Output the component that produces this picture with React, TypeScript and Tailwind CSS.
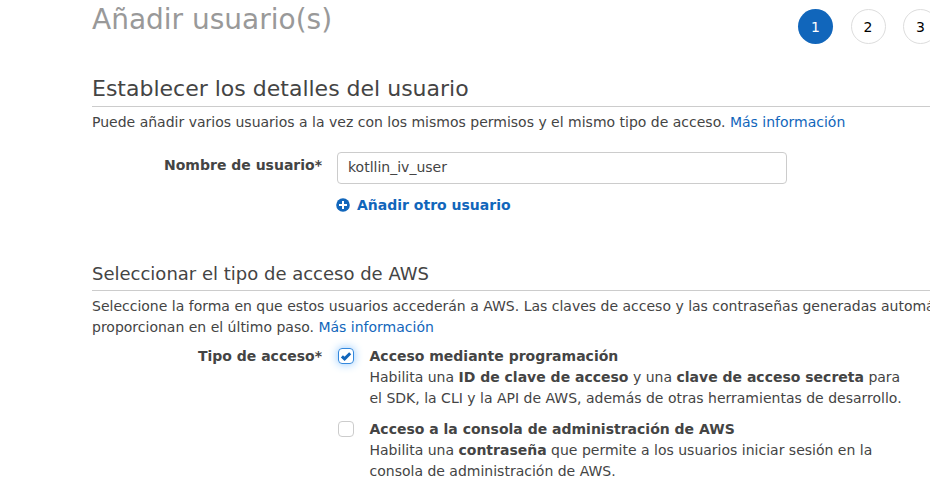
import React from "react";

function Step({ n, active }: { n: number; active?: boolean }) {
  return (
    <div
      className={
        active
          ? "flex h-[35px] w-[35px] shrink-0 items-center justify-center rounded-full bg-[#1166bb] pt-px text-white"
          : "flex h-[35px] w-[35px] shrink-0 items-center justify-center rounded-full border border-[#dddddd] bg-white pt-px text-black"
      }
    >
      {n}
    </div>
  );
}

export default function App() {
  return (
    <div className="h-[495px] w-[930px] overflow-hidden bg-white pl-[92px] font-['DejaVu_Sans',sans-serif] text-[14px] leading-[21px] text-[#444444]">
      <header className="flex h-[72px] items-start justify-between">
        <h1 className="pt-[2px] text-[28px] leading-[36px] text-[#999999]">Añadir usuario(s)</h1>
        <div className="-mr-2 flex gap-[17.5px] pt-[9px] text-[14px]">
          <Step n={1} active />
          <Step n={2} />
          <Step n={3} />
        </div>
      </header>

      <h2 className="h-[35px] border-b border-[#cccccc] text-[22px] leading-[34px]">Establecer los detalles del usuario</h2>
      <p className="mt-[5px] whitespace-nowrap">
        Puede añadir varios usuarios a la vez con los mismos permisos y el mismo tipo de acceso.{" "}
        <a className="text-[#1166bb]">Más información</a>
      </p>

      <div className="mt-[19px] flex">
        <label className="w-[230px] pt-[3px] text-right font-bold">Nombre de usuario*</label>
        <div className="ml-[15px]">
          <input
            className="block h-8 w-[450px] rounded-[4px] border border-[#cccccc] px-[10px] pb-[2px] text-[14px] text-[#444444] outline-none"
            defaultValue="kotllin_iv_user"
          />
          <a className="mt-[11px] flex items-center font-bold text-[#1166bb]">
            <svg className="-mt-px mr-[7px] -ml-px" width="14" height="14" viewBox="0 0 14 14">
              <circle cx="7" cy="7" r="6.8" fill="#1166bb" />
              <path d="M7 3v8M3 7h8" stroke="#fff" strokeWidth="2" />
            </svg>
            Añadir otro usuario
          </a>
        </div>
      </div>

      <h3 className="mt-[41px] h-[34px] border-b border-[#cccccc] text-[18px] leading-[34px]">Seleccionar el tipo de acceso de AWS</h3>
      <p className="mt-[5px] whitespace-nowrap">
        Seleccione la forma en que estos usuarios accederán a AWS. Las claves de acceso y las contraseñas generadas automáticamente
        <br />
        proporcionan en el último paso. <a className="text-[#1166bb]">Más información</a>
      </p>

      <div className="mt-[8px] flex">
        <div className="w-[230px] text-right font-bold">Tipo de acceso*</div>
        <div className="ml-[16px] flex flex-col gap-[10px] whitespace-nowrap">
          <div className="flex">
            <span className="mt-[2px] mr-[15.5px] flex h-4 w-4 items-center justify-center rounded-[4px] border border-[#3388dd] shadow-[0_0_10px_#88c4ff]">
              <svg className="shrink-0" width="12" height="12" viewBox="0 0 12 12">
                <path d="M1.9 6.4l2.7 2.5 5.6-5.6" fill="none" stroke="#1166bb" strokeWidth="3" />
              </svg>
            </span>
            <div>
              <b>Acceso mediante programación</b>
              <br />
              Habilita una <b>ID de clave de acceso</b> y una <b>clave de acceso secreta</b> para
              <br />
              el SDK, la CLI y la API de AWS, además de otras herramientas de desarrollo.
            </div>
          </div>
          <div className="flex">
            <span className="mt-[2px] mr-[15.5px] h-4 w-4 rounded-[4px] border border-[#cccccc]" />
            <div>
              <b>Acceso a la consola de administración de AWS</b>
              <br />
              Habilita una <b>contraseña</b> que permite a los usuarios iniciar sesión en la
              <br />
              consola de administración de AWS.
            </div>
          </div>
        </div>
      </div>
    </div>
  );
}
